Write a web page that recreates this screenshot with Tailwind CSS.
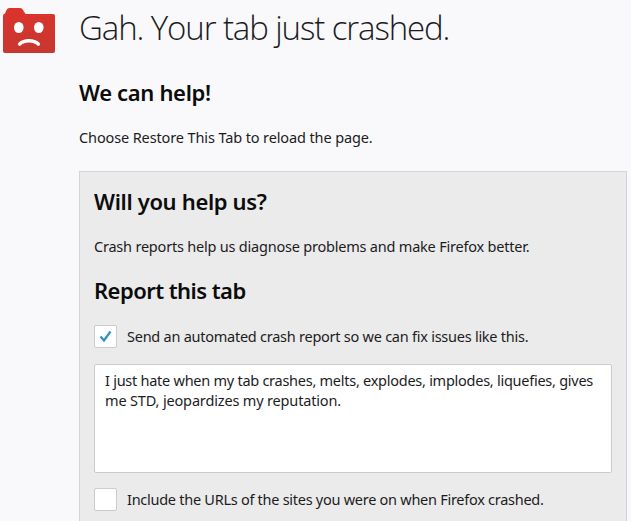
<!DOCTYPE html>
<html lang="en">
<head>
<meta charset="utf-8">
<title>Tab crash report</title>
<script src="https://cdn.jsdelivr.net/npm/@tailwindcss/browser@4"></script>
</head>
<body class="w-[631px] h-[521px] overflow-hidden bg-[#f9f9fb] text-[#1c1c1e] font-['Noto_Sans','Open_Sans',sans-serif] text-[14.5px] leading-5 whitespace-nowrap">
<main class="flex h-full">
  <div class="w-[79px] shrink-0 pt-[7px] pl-[2px]">
    <svg class="block" width="54" height="47" viewBox="0 0 54 47">
      <defs><linearGradient id="red" x1="0" y1="0" x2="0" y2="1"><stop offset="0" stop-color="#dc332c"/><stop offset="1" stop-color="#c73731"/></linearGradient></defs>
      <path d="M1 9Q1 6.500 3 6.500L4.500 3Q5.500 1 7.500 1H18Q20 1 21 3L23.500 7H51Q53 7 53 9V44Q53 46 51 46H3Q1 46 1 44Z" fill="url(#red)"/>
      <ellipse cx="16.800" cy="20.500" rx="4.800" ry="5.500" fill="#fff"/><ellipse cx="36.800" cy="20.500" rx="4.800" ry="5.500" fill="#fff"/>
      <path d="M17.700 37C22.500 32.600 31.500 32.600 36.300 37" fill="none" stroke="#fff" stroke-width="3.600" stroke-linecap="round"/>
    </svg>
  </div>
  <div class="w-[548px] shrink-0 flex flex-col">
    <h1 class="h-[56px] leading-[56px] font-['Open_Sans','Noto_Sans',sans-serif] font-light text-[33px] tracking-[-1.1px]">Gah. Your tab just crashed.</h1>
    <h2 class="mt-[21px] h-[30px] leading-[30px] text-[22px] font-semibold text-[#0c0c0d] tracking-[-0.34px]">We can help!</h2>
    <p class="mt-[20px] tracking-[-0.12px]">Choose Restore This Tab to reload the page.</p>
    <section class="mt-[24px] h-[350px] bg-[#ebebeb] border border-b-0 border-[#d3d3d7] px-[14px]">
      <h2 class="mt-[14px] h-[30px] leading-[30px] text-[22px] font-semibold text-[#0c0c0d] tracking-[-0.34px]">Will you help us?</h2>
      <p class="mt-[20px] tracking-[-0.21px]">Crash reports help us diagnose problems and make Firefox better.</p>
      <h2 class="mt-[19px] h-[30px] leading-[30px] text-[22px] font-semibold text-[#0c0c0d] tracking-[-0.55px]">Report this tab</h2>
      <div class="mt-[20px] flex items-center gap-[10px] h-[23px]">
        <div class="w-[23px] h-[23px] bg-white border border-[#cbcbcb] rounded-[2px] flex items-center justify-center"><svg width="13" height="13" viewBox="0 0 13 13"><path d="M1.500 6.500L5 10.500L11.500 1.500" fill="none" stroke="#2f8fc8" stroke-width="2.200"/></svg></div>
        <span class="pb-[2px] tracking-[-0.25px]">Send an automated crash report so we can fix issues like this.</span>
      </div>
      <div class="mt-[16px] w-[518px] h-[109px] bg-white border border-[#cbcbcb] rounded-[2px] pl-[10px] pt-[5px]">
        <p class="tracking-[-0.26px]">I just hate when my tab crashes, melts, explodes, implodes, liquefies, gives</p>
        <p class="tracking-[-0.16px]">me STD, jeopardizes my reputation.</p>
      </div>
      <div class="mt-[15px] flex items-center gap-[10px] h-[23px]">
        <div class="w-[23px] h-[23px] bg-white border border-[#cbcbcb] rounded-[2px]"></div>
        <span class="pb-[2px] tracking-[-0.27px]">Include the URLs of the sites you were on when Firefox crashed.</span>
      </div>
    </section>
  </div>
</main>
</body>
</html>
